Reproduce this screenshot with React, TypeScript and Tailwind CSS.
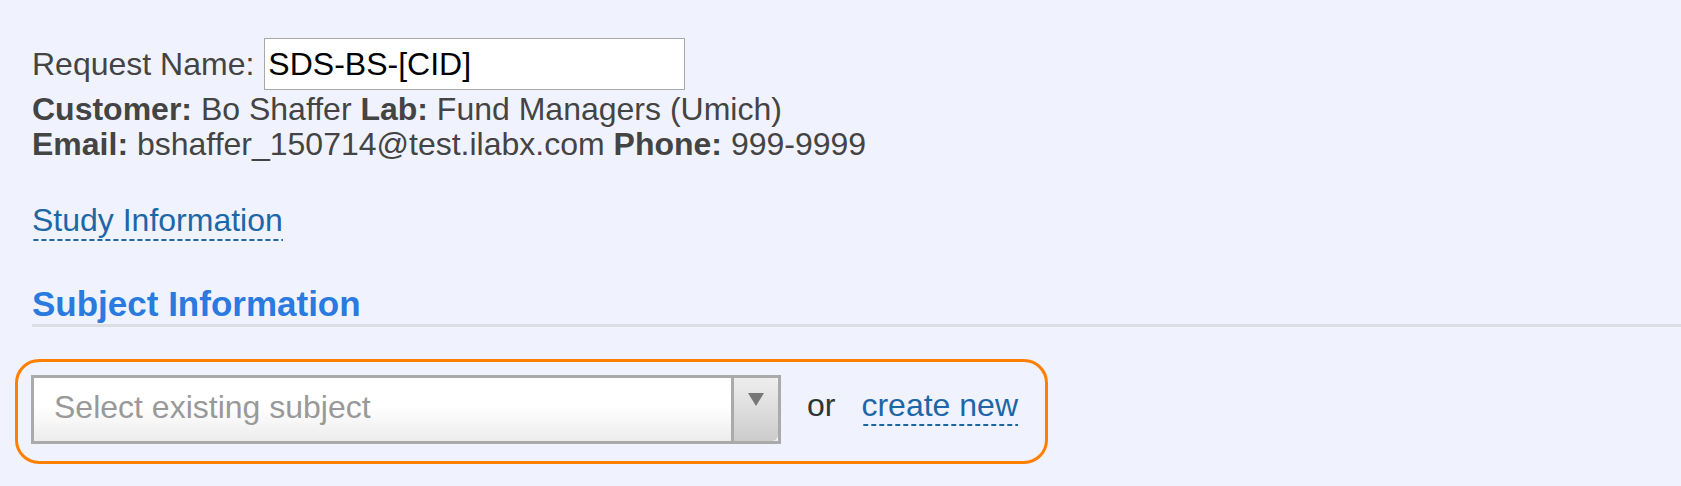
export default function App() {
  return (
    <div className="min-h-screen bg-[#f0f3fd] pl-[15px] pt-[38px] font-['Liberation_Sans',Arial,sans-serif] text-[32px] text-[#444]">
      <div className="pl-[17px]">
        {/* Request name */}
        <div className="flex items-center">
          <label className="leading-[36px]">Request Name:</label>
          <input
            defaultValue="SDS-BS-[CID]"
            className="ml-[10px] h-[52px] w-[421px] border border-[#a9a9a9] bg-white px-[3px] text-[32px] leading-[36px] text-black outline-none"
          />
        </div>

        {/* Customer info */}
        <div className="mt-[2px] leading-[35px]">
          <div>
            <b>Customer:</b> Bo Shaffer <b>Lab:</b> Fund Managers (Umich)
          </div>
          <div>
            <b>Email:</b> bshaffer_150714@test.ilabx.com <b>Phone:</b> 999-9999
          </div>
        </div>

        <div className="mt-[40px] leading-[36px]">
          <a className="inline-block cursor-pointer bg-[linear-gradient(to_right,#1c64a3_5px,transparent_5px)] bg-[length:8px_2px] bg-bottom bg-repeat-x pb-[3px] leading-[36px] text-[#1e67a6]">
            Study Information
          </a>
        </div>

        <h2 className="mt-[43px] border-b-[3px] border-[#dddee3] text-[35px] font-bold leading-[40px] text-[#2a7ae0]">
          Subject Information
        </h2>
      </div>

      {/* Subject picker */}
      <div className="mt-[32px] flex w-[1033px] items-start rounded-[24px] border-[3px] border-[#ff8000] pb-[17px] pl-[13px] pt-[13px]">
        <div className="flex h-[69px] w-[750px] border-[3px] border-[#aaa] bg-[#f2f2f2]">
          <div className="flex-1 bg-[linear-gradient(#ffffff_45%,#ececec)] pl-[20px] pt-[11px] leading-[36px] text-[#999]">
            Select existing subject
          </div>
          <div className="w-[3px] bg-[#aaa]" />
          <div className="flex w-[44px] flex-col items-center rounded-r-[6px] bg-[linear-gradient(#eeeeee,#cccccc)] pt-[15px]">
            <svg width="16" height="13" viewBox="0 0 16 13">
              <path d="M0 0H16L8 13Z" fill="#777" />
            </svg>
          </div>
        </div>
        <span className="ml-[26px] mt-[12px] leading-[36px] text-[#333]">or</span>
        <a className="ml-[26px] mt-[12px] inline-block cursor-pointer bg-[linear-gradient(to_right,#1c64a3_5px,transparent_5px)] bg-[length:8px_2px] bg-bottom bg-repeat-x pb-[3px] leading-[36px] text-[#1e67a6]">
          create new
        </a>
      </div>
    </div>
  );
}
